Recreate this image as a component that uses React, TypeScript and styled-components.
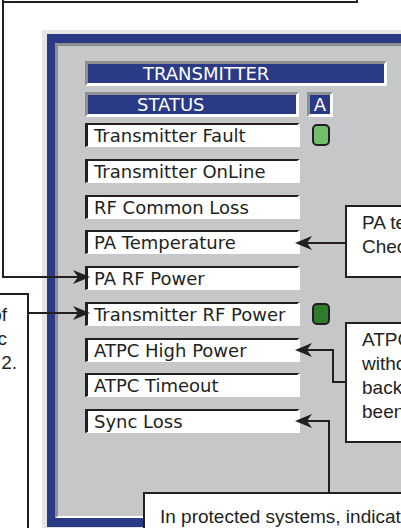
import React from "react";
import styled, { createGlobalStyle } from "styled-components";

const GlobalStyle = createGlobalStyle`
  html, body {
    margin: 0;
    padding: 0;
    background: #ffffff;
  }
`;

const INK = "#231f20";
const BLUE = "#2b3a86";

const rows = [
  { label: "Transmitter Fault", led: "light" },
  { label: "Transmitter OnLine" },
  { label: "RF Common Loss" },
  { label: "PA Temperature" },
  { label: "PA RF Power" },
  { label: "Transmitter RF Power", led: "dark" },
  { label: "ATPC High Power" },
  { label: "ATPC Timeout" },
  { label: "Sync Loss" },
];

// arrowhead pointing to the left, tip at (x, y)
const headLeft = (x: number, y: number) =>
  `M${x} ${y} L${x + 17} ${y - 7} L${x + 12} ${y} L${x + 17} ${y + 7} Z`;
// arrowhead pointing to the right, tip at (x, y)
const headRight = (x: number, y: number) =>
  `M${x} ${y} L${x - 17} ${y - 7} L${x - 12} ${y} L${x - 17} ${y + 7} Z`;

export default function App() {
  return (
    <>
      <GlobalStyle />
      <Canvas>
        <Panel>
          <Frame>
            <Inner>
              <Bar $w={302} $pad={55}>TRANSMITTER</Bar>
              <StatusLine>
                <Bar $w={214} $pad={49}>STATUS</Bar>
                <Bar $w={26} $pad={0} $center>A</Bar>
              </StatusLine>
              <Rows>
                {rows.map((r) => (
                  <Row key={r.label}>
                    <Field>{r.label}</Field>
                    {r.led && <Led $tone={r.led} />}
                  </Row>
                ))}
              </Rows>
            </Inner>
          </Frame>
        </Panel>

        <Wires width={401} height={528} viewBox="0 0 401 528">
          <g fill="none" stroke={INK} strokeWidth={2}>
            <polyline points="3,0 3,277 78,277" />
            <line x1={28} y1={313} x2={78} y2={313} />
            <line x1={345} y1={243} x2={306} y2={243} />
            <polyline points="345,382 333,382 333,350 306,350" />
            <polyline points="329,493 329,421 306,421" />
          </g>
          <g fill={INK}>
            <path d={headRight(90, 277)} />
            <path d={headRight(90, 313)} />
            <path d={headLeft(295, 243)} />
            <path d={headLeft(295, 350)} />
            <path d={headLeft(295, 421)} />
          </g>
        </Wires>

        <Callout $left={2} $top={-40} $w={356} $h={43} />
        <Callout $left={-120} $top={293} $w={149} $h={300}>
          <TailLine $inset={20}>of</TailLine>
          <TailLine $inset={20}>c</TailLine>
          <TailLine $inset={10}>2.</TailLine>
        </Callout>
        <Callout $left={345} $top={205} $w={200} $h={73} $padTop={4}>
          <Note>PA temperature high.</Note>
          <Note>Check the cooling.</Note>
        </Callout>
        <Callout $left={345} $top={322} $w={200} $h={121} $padTop={4}>
          <Note>ATPC power at maximum</Note>
          <Note>without the power</Note>
          <Note>backing off, it has</Note>
          <Note>been exceeded.</Note>
        </Callout>
        <Callout $left={143} $top={492} $w={320} $h={80} $padTop={11}>
          <Note>In protected systems, indicates a switch.</Note>
        </Callout>
      </Canvas>
    </>
  );
}

const Canvas = styled.div`
  position: relative;
  box-sizing: border-box;
  width: 401px;
  height: 528px;
  overflow: hidden;
  padding: 30px 0 0 42px;
  background: #ffffff;
`;

const Panel = styled.div`
  box-sizing: border-box;
  width: 420px;
  height: 502px;
  border-style: solid;
  border-color: #e4e5e6;
  border-width: 4px 0 5px 5px;
`;

const Frame = styled.div`
  box-sizing: border-box;
  height: 100%;
  border-style: solid;
  border-color: ${BLUE};
  border-width: 9px 0 9px 8px;
`;

const Inner = styled.div`
  box-sizing: border-box;
  height: 100%;
  background: #c6c7c9;
  border-top: 3px solid #8e8f91;
  border-left: 3px solid #8e8f91;
  border-bottom: 2px solid #ffffff;
  padding: 15px 0 0 27px;
  display: flex;
  flex-direction: column;
`;

const Bar = styled.div<{ $w: number; $pad: number; $center?: boolean }>`
  box-sizing: border-box;
  width: ${(p) => p.$w}px;
  height: 25px;
  background: ${BLUE};
  border-top: 3px solid #8e8f91;
  border-left: 3px solid #8e8f91;
  border-right: 3px solid #ffffff;
  border-bottom: 3px solid #ffffff;
  padding-left: ${(p) => p.$pad}px;
  display: flex;
  align-items: center;
  justify-content: ${(p) => (p.$center ? "center" : "flex-start")};
  color: #ffffff;
  font-family: "DejaVu Sans", sans-serif;
  font-size: 18px;
  line-height: 19px;
`;

const StatusLine = styled.div`
  display: flex;
  gap: 8px;
  margin-top: 6px;
`;

const Rows = styled.div`
  display: flex;
  flex-direction: column;
  gap: 11.75px;
  margin-top: 6px;
`;

const Row = styled.div`
  display: flex;
  align-items: center;
  gap: 12px;
`;

const Field = styled.div`
  box-sizing: border-box;
  width: 215px;
  height: 24px;
  background: #ffffff;
  border-top: 2px solid ${INK};
  border-left: 3px solid ${INK};
  border-right: 3px solid #ffffff;
  border-bottom: 1px solid #ffffff;
  padding-left: 6px;
  color: ${INK};
  font-family: "DejaVu Sans", sans-serif;
  font-size: 18px;
  line-height: 21px;
  white-space: nowrap;
`;

const Led = styled.div<{ $tone: string }>`
  box-sizing: border-box;
  width: 18px;
  height: 22px;
  border: 2px solid ${INK};
  border-radius: 5px;
  background: ${(p) => (p.$tone === "dark" ? "#2f7d2c" : "#72be6c")};
`;

const Wires = styled.svg`
  position: absolute;
  left: 0;
  top: 0;
  pointer-events: none;
`;

const Callout = styled.div<{ $left: number; $top: number; $w: number; $h: number; $padTop?: number }>`
  position: absolute;
  box-sizing: border-box;
  left: ${(p) => p.$left}px;
  top: ${(p) => p.$top}px;
  width: ${(p) => p.$w}px;
  height: ${(p) => p.$h}px;
  background: #ffffff;
  border: 2px solid ${INK};
  padding: ${(p) => p.$padTop ?? 8}px 0 0 15px;
  color: ${INK};
  font-family: "Liberation Sans", Arial, sans-serif;
  font-size: 19px;
  line-height: 24px;
`;

const Note = styled.div`
  white-space: nowrap;
`;

const TailLine = styled.div<{ $inset: number }>`
  text-align: right;
  padding-right: ${(p) => p.$inset}px;
  white-space: nowrap;
  &:first-child {
    margin-top: 0;
  }
`;
